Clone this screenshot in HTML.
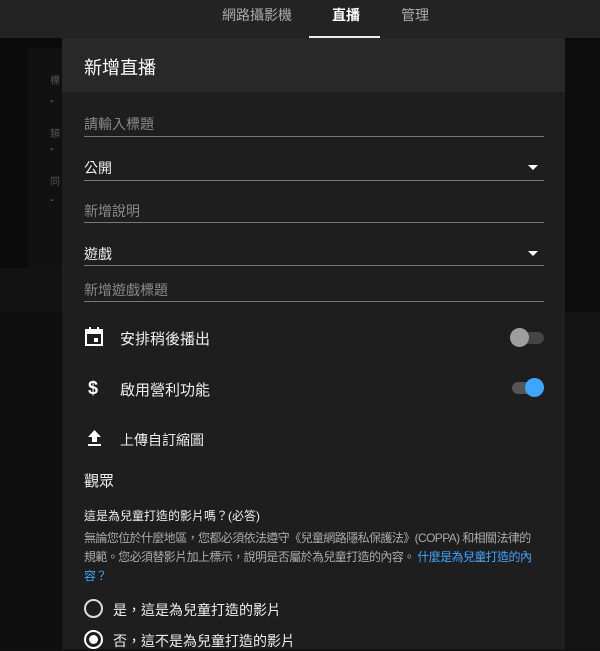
<!DOCTYPE html>
<html><head><meta charset="utf-8"><style>
*{margin:0;padding:0;box-sizing:border-box}
body{width:600px;height:649px;overflow:hidden;background:#121212;font-family:"Liberation Sans","Noto Sans CJK TC",sans-serif;position:relative;color:#fff}
.a{position:absolute}
.t{position:absolute;white-space:nowrap}
.line{position:absolute;left:84px;width:460px;height:1px;background:#777}
.ph{color:#8a8a8a;font-size:14px}
.val{color:#eee;font-size:14px}
.arrow{position:absolute;left:528px;width:0;height:0;border-left:5px solid transparent;border-right:5px solid transparent;border-top:5px solid #fff}
</style></head><body>
<div class="a" style="left:0;top:0;width:600px;height:38px;background:#232323"></div>
<div class="t" style="left:222px;top:5px;font-size:14px;color:#aaa">網路攝影機</div>
<div class="t" style="left:332px;top:5px;font-size:14px;color:#fff;font-weight:bold">直播</div>
<div class="t" style="left:401px;top:5px;font-size:14px;color:#aaa">管理</div>
<div class="a" style="left:309px;top:36px;width:71px;height:2px;background:#eee"></div>
<div class="a" style="left:0;top:38px;width:62px;height:230px;background:#0b0b0b"></div>
<div class="a" style="left:28px;top:48px;width:34px;height:220px;background:#111"></div>
<div class="a" style="left:0;top:268px;width:62px;height:44px;background:#121212"></div>
<div class="a" style="left:0;top:312px;width:62px;height:337px;background:#0e0e0e"></div>
<div class="a" style="left:565px;top:38px;width:35px;height:274px;background:#0c0c0c"></div>
<div class="a" style="left:565px;top:312px;width:35px;height:337px;background:#131313"></div>
<div class="t" style="left:50px;top:72px;font-size:10px;color:#555">標</div>
<div class="t" style="left:50px;top:96px;font-size:10px;color:#888">-</div>
<div class="t" style="left:50px;top:125px;font-size:10px;color:#555">類</div>
<div class="t" style="left:50px;top:144px;font-size:10px;color:#888">-</div>
<div class="t" style="left:50px;top:173px;font-size:10px;color:#555">同</div>
<div class="t" style="left:50px;top:195px;font-size:10px;color:#888">-</div>

<div class="a" style="left:62px;top:38px;width:503px;height:54px;background:#282828"></div>
<div class="a" style="left:62px;top:92px;width:503px;height:557px;background:#1e1e1e"></div>
<div class="t" style="left:84px;top:54px;font-size:18px;color:#fff">新增直播</div>

<div class="t ph" style="left:84px;top:114px">請輸入標題</div>
<div class="line" style="top:136px"></div>
<div class="t val" style="left:84px;top:158px">公開</div>
<div class="arrow" style="top:165px"></div>
<div class="line" style="top:180px"></div>
<div class="t ph" style="left:84px;top:201px">新增說明</div>
<div class="line" style="top:222px"></div>
<div class="t val" style="left:84px;top:244px">遊戲</div>
<div class="arrow" style="top:251px"></div>
<div class="line" style="top:265px"></div>
<div class="t ph" style="left:84px;top:280px">新增遊戲標題</div>
<div class="line" style="top:301px"></div>

<svg class="a" style="left:85px;top:327px" width="18" height="20" viewBox="0 0 18 20"><rect x="1" y="3" width="16" height="15" fill="none" stroke="#fff" stroke-width="2"/><rect x="1" y="3" width="16" height="4" fill="#fff"/><rect x="4" y="0" width="2" height="4" fill="#fff"/><rect x="12" y="0" width="2" height="4" fill="#fff"/><rect x="9" y="11" width="4" height="4" fill="#fff"/></svg>
<div class="t" style="left:120px;top:328px;font-size:15px;color:#eee">安排稍後播出</div>
<div class="a" style="left:512px;top:332px;width:32px;height:12px;border-radius:6px;background:#444"></div>
<div class="a" style="left:510px;top:328px;width:19px;height:19px;border-radius:50%;background:#9e9e9e"></div>

<div class="t" style="left:88px;top:378px;font-size:18px;color:#fff;font-weight:bold">$</div>
<div class="t" style="left:120px;top:379px;font-size:15px;color:#eee">啟用營利功能</div>
<div class="a" style="left:512px;top:382px;width:32px;height:12px;border-radius:6px;background:#555"></div>
<div class="a" style="left:525px;top:378px;width:19px;height:19px;border-radius:50%;background:#3ea6ff"></div>

<svg class="a" style="left:87px;top:430px" width="15" height="17" viewBox="0 0 15 17"><path d="M7.5 0L14 7H10V12H5V7H1Z" fill="#fff"/><rect x="1" y="14" width="13" height="2" fill="#fff"/></svg>
<div class="t" style="left:120px;top:430px;font-size:14px;color:#eee">上傳自訂縮圖</div>

<div class="t" style="left:84px;top:470px;font-size:15px;color:#eee">觀眾</div>
<div class="t" style="left:84px;top:507px;font-size:12px;color:#eee">這是為兒童打造的影片嗎？(必答)</div>
<div class="a" style="left:84px;top:529px;width:480px;white-space:nowrap;font-size:12px;line-height:19px;letter-spacing:-0.6px;color:#aaa">無論您位於什麼地區，您都必須依法遵守《兒童網路隱私保護法》(COPPA) 和相關法律的<br>規範。您必須替影片加上標示，說明是否屬於為兒童打造的內容。 <span style="color:#3ea6ff">什麼是為兒童打造的內<br>容？</span></div>

<div class="a" style="left:84px;top:599px;width:19px;height:19px;border-radius:50%;border:2px solid #ddd"></div>
<div class="t" style="left:113px;top:600px;font-size:14px;color:#eee">是，這是為兒童打造的影片</div>
<div class="a" style="left:84px;top:630px;width:19px;height:19px;border-radius:50%;border:2px solid #fff"></div>
<div class="a" style="left:89px;top:635px;width:9px;height:9px;border-radius:50%;background:#fff"></div>
<div class="t" style="left:113px;top:631px;font-size:14px;color:#eee">否，這不是為兒童打造的影片</div>
</body></html>
